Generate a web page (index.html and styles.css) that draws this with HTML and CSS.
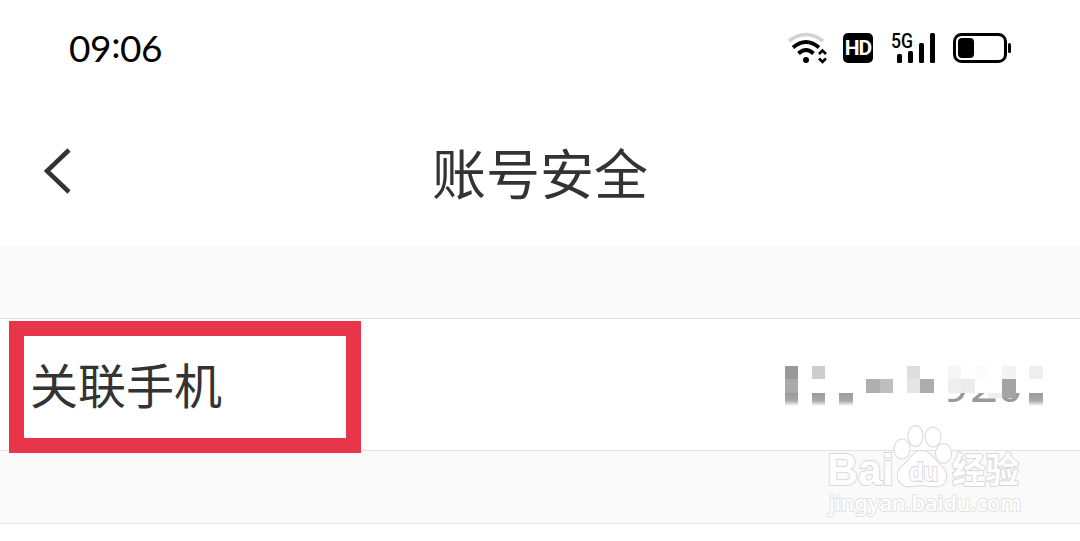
FILE: index.html
```
<!DOCTYPE html>
<html lang="zh-CN">
<head>
    <meta charset="UTF-8">
    <meta name="viewport" content="width=device-width, initial-scale=1.0">
    <title>账号安全</title>
    <link rel="stylesheet" href="styles.css">
</head>
<body>
    <div class="status-bar">
        <span class="time">09<span class="colon">:</span>06</span>
        <div class="status-icons">
            <svg class="wifi" width="40" height="32" viewBox="0 0 40 32" fill="none">
                <path d="M2 9Q19 -4 36 9" stroke="#d2d2d2" stroke-width="3.6"/>
                <path d="M6 15.500Q19 4.500 32 15.500M11.500 21.500Q19 14.500 26.500 21.500" stroke="#000" stroke-width="3.800"/>
                <circle cx="19" cy="28" r="3" fill="#000"/>
                <path d="M32 22L35.500 18.500L39 22M32 26.500L35.500 30L39 26.500" stroke="#000" stroke-width="2.600"/>
            </svg>
            <span class="hd">HD</span>
            <svg class="signal" width="44" height="32" viewBox="0 0 44 32">
                <text class="signal-label" x="0" y="15.500" textLength="22" lengthAdjust="spacingAndGlyphs">5G</text>
                <rect x="6" y="22" width="5" height="9" rx="1.500"/>
                <rect x="17" y="19" width="5" height="12" rx="1.500"/>
                <rect x="28" y="11" width="5" height="20" rx="1.500"/>
                <rect x="39" y="1" width="5" height="30" rx="1.500"/>
            </svg>
            <svg class="battery" width="58" height="30" viewBox="0 0 58 30">
                <rect x="1.500" y="1.500" width="51" height="27" rx="7" fill="none" stroke="#000" stroke-width="3"/>
                <rect x="5" y="5" width="16" height="20" rx="4"/>
                <rect x="55" y="10" width="3" height="10" rx="1.500"/>
            </svg>
        </div>
    </div>
    <div class="header">
        <svg class="back" width="28" height="46" viewBox="0 0 28 46">
            <path d="M25 2L3 23L25 44" fill="none" stroke="#333" stroke-width="4.500"/>
        </svg>
        <h1 class="title">账号安全</h1>
    </div>
    <div class="gap"></div>
    <div class="row">
        <div class="highlight"><span class="label">关联手机</span></div>
        <svg class="phone" width="270" height="50" viewBox="0 0 270 50">
            <defs>
                <clipPath id="lower"><rect x="0" y="33" width="270" height="9"/></clipPath>
                <linearGradient id="fade" x1="0" y1="0" x2="0" y2="1">
                    <stop offset="0" stop-color="#999"/>
                    <stop offset="0.600" stop-color="#aaa"/>
                    <stop offset="1" stop-color="#fff"/>
                </linearGradient>
            </defs>
            <g clip-path="url(#lower)">
                <text class="digit" x="159" y="41.500">9</text>
                <text class="digit" x="185" y="41.500" textLength="28" lengthAdjust="spacingAndGlyphs">2</text>
                <text class="digit" x="213" y="41.500">0</text>
            </g>
            <rect x="0" y="6" width="13" height="13" fill="#999"/>
            <rect x="0" y="19" width="13" height="17" fill="#aaa"/>
            <rect x="0" y="33" width="13" height="13" fill="url(#fade)"/>
            <rect x="27" y="6" width="13" height="13" fill="#cdcdcd"/>
            <rect x="27" y="33" width="13" height="13" fill="url(#fade)"/>
            <rect x="54" y="33" width="14" height="13" fill="url(#fade)"/>
            <rect x="81" y="19" width="14" height="14" fill="#afafaf"/>
            <rect x="95" y="19" width="13" height="14" fill="#bebebe"/>
            <rect x="122" y="6" width="13" height="13" fill="#ddd"/>
            <rect x="122" y="19" width="13" height="14" fill="#e5e5e5"/>
            <rect x="135" y="19" width="14" height="14" fill="#adadad"/>
            <rect x="163" y="6" width="13" height="13" fill="#f6f6f6"/>
            <rect x="163" y="19" width="13" height="14" fill="#eee"/>
            <rect x="176" y="19" width="14" height="14" fill="#ececec"/>
            <rect x="190" y="6" width="13" height="13" fill="#fbfbfb"/>
            <rect x="203" y="33" width="14" height="5" fill="#eee"/>
            <rect x="217" y="6" width="14" height="13" fill="#f3f3f3"/>
            <rect x="217" y="19" width="14" height="19" fill="#a4a4a4"/>
            <rect x="244" y="6" width="14" height="13" fill="#eee"/>
            <rect x="244" y="33" width="14" height="13" fill="url(#fade)"/>
        </svg>
    </div>
    <div class="gap"></div>

    <!-- watermark lies over the list -->
    <svg class="watermark" width="210" height="100" viewBox="0 0 210 100">
        <g class="mark">
            <text class="brand" x="7" y="65" textLength="67" lengthAdjust="spacingAndGlyphs">Bai</text>
            <ellipse cx="82" cy="29" rx="7.500" ry="9.500"/>
            <ellipse cx="95.500" cy="16" rx="7" ry="10"/>
            <ellipse cx="113" cy="17" rx="7.500" ry="9.500"/>
            <ellipse cx="123.500" cy="33.500" rx="7.500" ry="9.500"/>
            <path d="M101 31C93 31 91 39 85 44C78 49 77 54 78 58C80 65 86 67 92 66C99 65 105 65 112 66C120 67 125 65 126 58C127 51 122 47 118 43C112 37 110 31 101 31Z"/>
            <text class="du" x="89" y="61" textLength="29" lengthAdjust="spacingAndGlyphs">du</text>
            <text class="cn" x="132" y="63" textLength="67" lengthAdjust="spacingAndGlyphs">经验</text>
            <text class="url" x="9" y="91" textLength="192" lengthAdjust="spacingAndGlyphs">jingyan.baidu.com</text>
        </g>
    </svg>
</body>
</html>
```
FILE: styles.css
```
* {
    box-sizing: border-box;
}

body {
    margin: 0;
    height: 541px;
    overflow: hidden;
    position: relative;
    background-color: #fff;
    color: #333;
    font-family: "Noto Sans CJK SC", sans-serif;
}

.status-bar {
    display: flex;
    justify-content: space-between;
    align-items: center;
    height: 97px;
    padding: 0 69px 2px 69px;
}

.time {
    color: #000;
    font-family: Lato, sans-serif;
    font-size: 37px;
    line-height: 40px;
    letter-spacing: -0.4px;
}

.colon {
    position: relative;
    top: -4px;
}

.status-icons {
    display: flex;
    align-items: center;
}

.hd {
    width: 30px;
    height: 30px;
    margin: 0 18px 0 16px;
    border-radius: 5px;
    background-color: #000;
    color: #fff;
    font-family: Roboto, sans-serif;
    font-size: 21px;
    font-weight: bold;
    line-height: 31px;
    letter-spacing: -1px;
    text-align: center;
}

.signal {
    margin-right: 18px;
}

.signal-label {
    font-family: Roboto, sans-serif;
    font-size: 20px;
    font-weight: 500;
}

.header {
    display: grid;
    grid-template-columns: 1fr auto 1fr;
    align-items: center;
    height: 149px;
    padding: 0 44px 2px;
}

.title {
    margin: 2px 0 0;
    font-size: 54px;
    font-weight: normal;
    line-height: 80px;
}

.gap {
    height: 73px;
    background-color: #fafafa;
    border-bottom: 1px solid #e2e2e2;
}

.row {
    display: flex;
    justify-content: space-between;
    height: 132px;
    padding: 2px 25px 0 9px;
    border-bottom: 1px solid #e2e2e2;
}

.highlight {
    display: flex;
    align-items: center;
    position: relative;
    width: 352px;
    height: 132px;
    padding: 0 0 8px 6px;
    border: 15px solid #e93549;
}

.label {
    font-size: 48px;
    line-height: 70px;
}

.phone {
    margin-top: 39px;
}

.digit {
    fill: #999;
    font-family: "Noto Sans", sans-serif;
    font-size: 42px;
}

.watermark {
    position: absolute;
    left: 820px;
    top: 420px;
}

.mark {
    fill: #fff;
    stroke: #d8d8d8;
    stroke-width: 2px;
    paint-order: stroke;
}

.brand, .du {
    font-family: "Liberation Sans", sans-serif;
    font-weight: bold;
}

.brand {
    font-size: 45px;
}

.du {
    font-size: 25px;
}

.cn {
    font-size: 35px;
    font-weight: bold;
}

.url {
    font-family: "Noto Sans", sans-serif;
    font-size: 22px;
    font-weight: 500;
    stroke: #e2e2e2;
}
```
